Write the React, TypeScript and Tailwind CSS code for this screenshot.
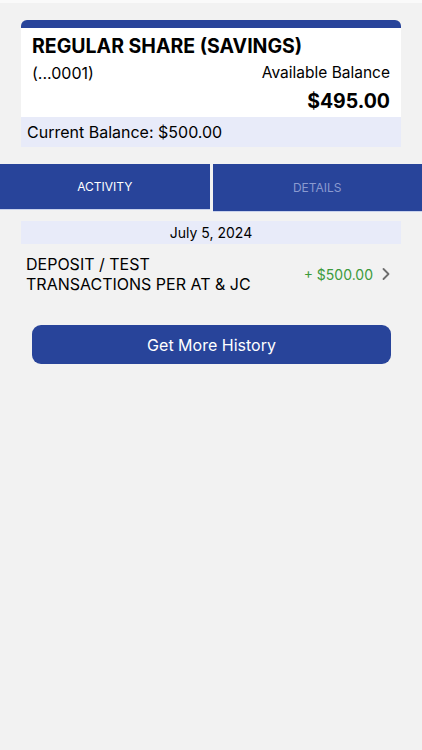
import React from 'react';
import { ChevronRight } from 'lucide-react';

export default function App() {
  return (
    <div className="min-h-[750px] w-full bg-[#f2f2f2] font-['Inter',sans-serif] text-black">
      <div className="h-[3px] bg-[#fafafa]" />

      {/* Account card */}
      <div className="px-[21px] pt-[17px]">
        <div className="h-[8px] rounded-t-[6px] bg-[#28449a]" />
        <div className="bg-white px-[11px] pb-[3px] pt-[6px]">
          <div className="text-[19.5px] font-bold leading-[24px]">REGULAR SHARE (SAVINGS)</div>
          <div className="mt-[4px] flex items-center justify-between text-[16px] leading-[22px]">
            <span>(...0001)</span>
            <span className="text-[15.5px]">Available Balance</span>
          </div>
          <div className="mt-[4px] text-right text-[19.5px] font-bold leading-[26px]">$495.00</div>
        </div>
        <div className="flex h-[30px] items-center bg-[#e8ebf9] px-[6px] text-[16px]">Current Balance: $500.00</div>
      </div>

      {/* Tabs */}
      <div className="mt-[17px] flex items-start gap-[3px]">
        <div className="flex h-[46px] flex-1 items-center justify-center border-b border-[#c9d2ec] bg-[#28449a] text-[12px] text-white">
          ACTIVITY
        </div>
        <div className="flex h-[48px] flex-1 items-center justify-center border-b border-[#c9d2ec] bg-[#28449a] text-[12px] text-[#8a9ad0]">
          DETAILS
        </div>
      </div>

      {/* Activity */}
      <div className="px-[21px] pt-[9px]">
        <div className="flex h-[23px] items-center justify-center bg-[#e8ebf9] text-[14px]">July 5, 2024</div>
        <div className="flex items-center justify-between pl-[5px] pr-[5px] pt-[10px]">
          <div className="text-[16px] leading-[20px]">
            <div>DEPOSIT / TEST</div>
            <div>TRANSACTIONS PER AT &amp; JC</div>
          </div>
          <div className="flex items-center gap-[3px]">
            <span className="text-[14px] text-[#3c9a3c]">+ $500.00</span>
            <ChevronRight size={20} strokeWidth={2.2} className="text-[#6e6e6e]" />
          </div>
        </div>
      </div>

      <div className="px-[32px] pt-[31px]">
        <button className="flex h-[39px] w-[359px] items-center justify-center rounded-[9px] bg-[#28449a] text-[16px] text-white">
          Get More History
        </button>
      </div>
    </div>
  );
}
